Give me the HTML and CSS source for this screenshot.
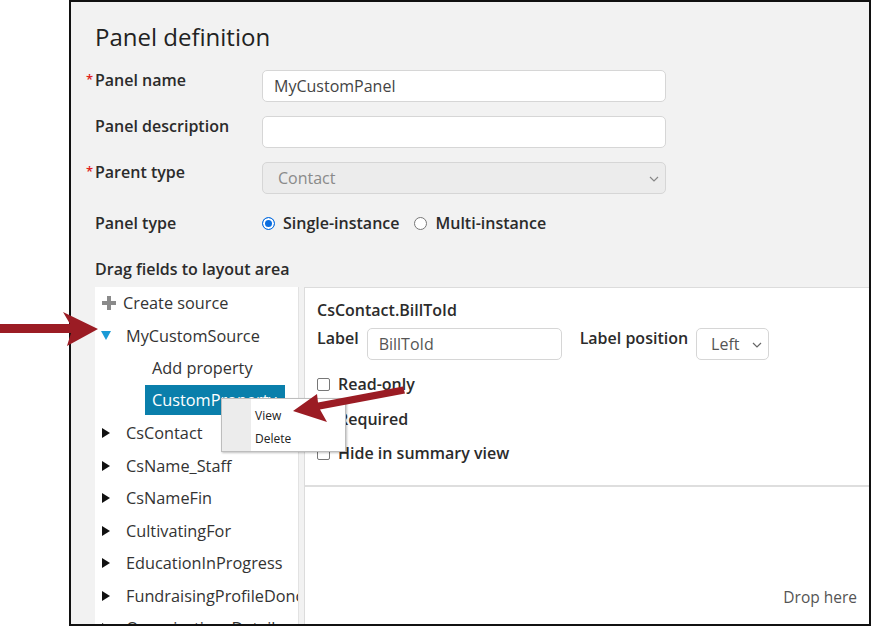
FILE: index.html
```html
<!DOCTYPE html>
<html lang="en">
<head>
    <meta charset="UTF-8">
    <title>Panel definition</title>
    <link rel="stylesheet" href="styles.css">
</head>
<body>
    <div class="frame">
        <h1>Panel definition</h1>

        <div class="field-row">
            <label class="field-label required">Panel name</label>
            <div class="text-input">MyCustomPanel</div>
        </div>
        <div class="field-row">
            <label class="field-label">Panel description</label>
            <div class="text-input"></div>
        </div>
        <div class="field-row">
            <label class="field-label required">Parent type</label>
            <div class="text-input select disabled">Contact
                <svg class="chevron" width="10" height="6" viewBox="0 0 10 6"><path d="M1 1l4 4 4-4" fill="none" stroke="#888" stroke-width="1.2"/></svg>
            </div>
        </div>
        <div class="field-row type-row">
            <label class="field-label">Panel type</label>
            <div class="radio-group">
                <span class="radio checked"></span><span class="radio-text">Single-instance</span>
                <span class="radio"></span><span class="radio-text">Multi-instance</span>
            </div>
        </div>

        <div class="section-title">Drag fields to layout area</div>

        <div class="layout">
            <div class="tree">
                <div class="tree-item">
                    <svg class="plus" width="14" height="14" viewBox="0 0 14 14"><path d="M5 0h4v5h5v4H9v5H5V9H0V5h5z" fill="#8a8a8a"/></svg>
                    <span class="create">Create source</span>
                </div>
                <div class="tree-item">
                    <span class="tri open"></span>MyCustomSource
                </div>
                <div class="tree-item child add">Add property</div>
                <div class="tree-item child sel-row"><span class="selected">CustomProperty</span></div>
                <div class="tree-item"><span class="tri"></span>CsContact</div>
                <div class="tree-item"><span class="tri"></span>CsName_Staff</div>
                <div class="tree-item"><span class="tri"></span>CsNameFin</div>
                <div class="tree-item"><span class="tri"></span>CultivatingFor</div>
                <div class="tree-item"><span class="tri"></span>EducationInProgress</div>
                <div class="tree-item"><span class="tri"></span>FundraisingProfileDonor</div>
                <div class="tree-item"><span class="tri"></span>OrganizationsDetail</div>
            </div>

            <div class="canvas">
                <div class="props">
                    <div class="props-title">CsContact.BillToId</div>
                    <div class="props-row">
                        <label class="field-label">Label</label>
                        <div class="text-input small">BillToId</div>
                        <label class="field-label pos-label">Label position</label>
                        <div class="text-input small select pos-select">Left
                            <svg class="chevron" width="10" height="6" viewBox="0 0 10 6"><path d="M1 1l4 4 4-4" fill="none" stroke="#666" stroke-width="1.2"/></svg>
                        </div>
                    </div>
                    <div class="check-row"><span class="checkbox"></span>Read-only</div>
                    <div class="check-row"><span class="checkbox"></span>Required</div>
                    <div class="check-row"><span class="checkbox"></span>Hide in summary view</div>
                </div>
                <div class="drop-area">
                    <span class="drop-text">Drop here</span>
                </div>
            </div>
        </div>

        <div class="context-menu">
            <div class="menu-item">View</div>
            <div class="menu-item">Delete</div>
        </div>
    </div>

    <svg class="annotations" width="871" height="626" viewBox="0 0 871 626">
        <polygon points="0,324 70,324 63,312 98,329 67,346 71,333 0,333" fill="#9b1c24"/>
        <polygon points="293,411 317,394 318,402.5 403,386.5 405,393.5 320,409.5 327,422" fill="#9b1c24"/>
    </svg>
</body>
</html>
```

FILE: styles.css
```css
body {
    margin: 0;
    background: #fff;
    font-family: "Open Sans", "Liberation Sans", sans-serif;
    color: #2b2b2b;
}
.frame {
    position: relative;
    box-sizing: border-box;
    width: 802px;
    height: 626px;
    margin-left: 69px;
    border: 2px solid #111;
    background: #f2f2f2;
    padding-left: 24px;
    overflow: hidden;
}
h1 {
    margin: 0;
    padding-top: 20px;
    height: 30px;
    line-height: 30px;
    font-size: 24px;
    font-weight: 500;
    color: #222;
    margin-bottom: 18px;
}
.field-row {
    display: flex;
    align-items: flex-start;
    margin-bottom: 14px;
}
.field-label {
    width: 167px;
    flex-shrink: 0;
    font-size: 16px;
    font-weight: 600;
    line-height: 20px;
    color: #2b2b2b;
    position: relative;
}
.required::before {
    content: "*";
    position: absolute;
    left: -9px;
    top: -1px;
    color: #e02020;
    font-size: 13px;
}
.text-input {
    position: relative;
    box-sizing: border-box;
    width: 404px;
    height: 32px;
    background: #fff;
    border: 1px solid #d6d6d6;
    border-radius: 5px;
    padding-left: 11px;
    font-size: 16px;
    line-height: 30px;
    color: #444;
}
.disabled {
    background: #ececec;
    color: #8a8a8a;
    padding-left: 15px;
}
.chevron {
    position: absolute;
    right: 6px;
    top: 13px;
}
.type-row {
    margin-top: 19px;
    margin-bottom: 26px;
}
.radio-group {
    display: flex;
    align-items: center;
    height: 20px;
    font-size: 16px;
    font-weight: 600;
}
.radio {
    box-sizing: border-box;
    width: 13px;
    height: 13px;
    border-radius: 50%;
    border: 1px solid #777;
    background: #fff;
    margin-right: 8px;
}
.radio.checked {
    border: 1px solid #0b6ee0;
    box-shadow: inset 0 0 0 2px #fff;
    background: #0b6ee0;
}
.radio-text {
    margin-right: 15px;
}
.section-title {
    font-size: 16px;
    font-weight: 600;
    line-height: 20px;
    margin-bottom: 8px;
}
.layout {
    display: flex;
    height: 339px;
}
.tree {
    width: 203px;
    flex-shrink: 0;
    background: #fff;
    border-right: 1px solid #e2e2e2;
    overflow: hidden;
    white-space: nowrap;
}
.tree-item {
    display: flex;
    align-items: center;
    height: 32.5px;
    padding-left: 6px;
    font-size: 16.3px;
    color: #333;
}
.plus {
    margin-left: 1px;
    margin-right: 7px;
}
.tri {
    width: 0;
    height: 0;
    margin-right: 16px;
    border-left: 8px solid #111;
    border-top: 5px solid transparent;
    border-bottom: 5px solid transparent;
    margin-left: 1px;
}
.tri.open {
    border-left: 5px solid transparent;
    border-right: 5px solid transparent;
    border-top: 9px solid #1a9ad6;
    border-bottom: 0;
    margin-left: 0;
    margin-right: 15px;
}
.tree-item.child {
    padding-left: 50px;
}
.tree-item.add {
    padding-left: 57px;
}
.tree-item.sel-row {
    align-items: flex-start;
}
.selected {
    display: inline-block;
    height: 30px;
    line-height: 30px;
    padding: 0 8px 0 7px;
    background: #0a7fab;
    color: #fff;
}
.canvas {
    flex: 1;
    margin-left: 5px;
    background: #fff;
    border-top: 1px solid #dcdcdc;
    border-left: 1px solid #dcdcdc;
}
.props {
    height: 199px;
    border-bottom: 2px solid #dedede;
    padding: 12px 0 0 12px;
    box-sizing: border-box;
}
.props-title {
    font-size: 16px;
    font-weight: 600;
    line-height: 20px;
    margin-bottom: 8px;
}
.props-row {
    display: flex;
    align-items: flex-start;
    margin-bottom: 7px;
}
.props-row .field-label {
    width: auto;
    margin-right: 8px;
}
.text-input.small {
    width: 195px;
    color: #555;
}
.props-row .pos-label {
    margin-left: 18px;
    margin-right: 8px;
}
.pos-select {
    width: 73px !important;
    padding-left: 14px;
}
.check-row {
    display: flex;
    align-items: center;
    height: 34.5px;
    font-size: 16px;
    font-weight: 600;
}
.checkbox {
    box-sizing: border-box;
    width: 13px;
    height: 13px;
    border: 1px solid #777;
    border-radius: 2px;
    margin-right: 8px;
    background: #fff;
}
.drop-area {
    height: 137px;
    display: flex;
    align-items: flex-end;
    justify-content: flex-end;
    padding-right: 12px;
    box-sizing: border-box;
    padding-bottom: 16px;
}
.drop-text {
    font-size: 15.5px;
    color: #555;
}
.context-menu {
    position: absolute;
    left: 150px;
    top: 396px;
    width: 125px;
    height: 54px;
    box-sizing: border-box;
    background: #fff;
    border: 1px solid #bdbdbd;
    box-shadow: 1px 1px 2px rgba(0, 0, 0, 0.25);
    background-image: linear-gradient(to right, #ececec 29px, #fff 29px);
    padding-top: 5px;
}
.menu-item {
    padding-left: 33px;
    font-size: 12px;
    line-height: 23px;
    color: #222;
}
.annotations {
    position: absolute;
    left: 0;
    top: 0;
    pointer-events: none;
}
```
